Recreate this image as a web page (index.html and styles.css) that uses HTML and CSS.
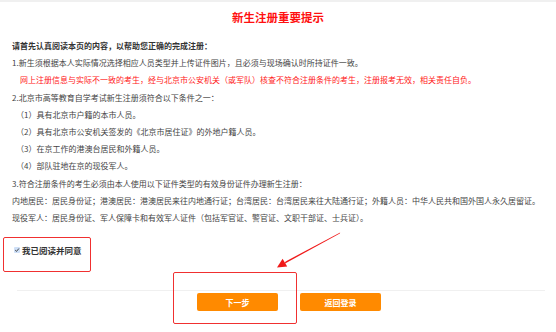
FILE: index.html
```html
<!DOCTYPE html>
<html lang="zh-CN">
<head>
<meta charset="utf-8">
<title>新生注册重要提示</title>
<link rel="stylesheet" href="styles.css">
</head>
<body>
<div class="page">
  <h1 class="title">新生注册重要提示</h1>
  <div class="content">
    <div class="line strong">请首先认真阅读本页的内容，以帮助您正确的完成注册：</div>
    <div class="line">1.新生须根据本人实际情况选择相应人员类型并上传证件图片，且必须与现场确认时所持证件一致。</div>
    <div class="line warn">网上注册信息与实际不一致的考生，经与北京市公安机关（或军队）核查不符合注册条件的考生，注册报考无效，相关责任自负。</div>
    <div class="line">2.北京市高等教育自学考试新生注册须符合以下条件之一：</div>
    <div class="line sub">（1）具有北京市户籍的本市人员。</div>
    <div class="line sub">（2）具有北京市公安机关签发的《北京市居住证》的外地户籍人员。</div>
    <div class="line sub">（3）在京工作的港澳台居民和外籍人员。</div>
    <div class="line sub">（4）部队驻地在京的现役军人。</div>
    <div class="line">3.符合注册条件的考生必须由本人使用以下证件类型的有效身份证件办理新生注册：</div>
    <div class="line">内地居民：居民身份证；港澳居民：港澳居民来往内地通行证；台湾居民：台湾居民来往大陆通行证；外籍人员：中华人民共和国外国人永久居留证。</div>
    <div class="line">现役军人：居民身份证、军人保障卡和有效军人证件（包括军官证、警官证、文职干部证、士兵证）。</div>
  </div>
  <label class="agree">
    <span class="check"><svg viewBox="0 0 6 6" width="6" height="6"><path d="M1.2 3.1 L2.5 4.4 L4.9 1.5" fill="none" stroke="#333" stroke-width="0.9"/></svg></span>
    <span class="agree-text">我已阅读并同意</span>
  </label>
  <div class="divider"></div>
  <div class="actions">
    <button class="btn">下一步</button>
    <button class="btn">返回登录</button>
  </div>

  <div class="mark mark-agree"></div>
  <div class="mark mark-next"></div>
  <svg class="arrow" width="556" height="332" viewBox="0 0 556 332">
    <polygon fill="#f01a1a" points="340.2,232.6 339.8,233.4 284.2,264.0 285.6,261.4"/>
    <polygon fill="#f01a1a" points="277,267.5 287.2,266.4 282.6,258.8"/>
  </svg>
</div>
</body>
</html>
```
FILE: styles.css
```css
html, body {
  margin: 0;
  padding: 0;
  background: #fff;
}
body {
  font-family: "Noto Sans CJK SC", "Noto Sans", sans-serif;
  color: #444;
}
.page {
  position: relative;
  width: 556px;
  height: 332px;
  box-sizing: border-box;
  border-top: 2px solid #f0f0f0;
  overflow: hidden;
}
.title {
  margin: 9px 0 0;
  font-size: 11.5px;
  line-height: 12px;
  font-weight: bold;
  color: #ff1010;
  text-align: center;
}
.content {
  margin-top: 14px;
  padding-left: 12px;
  font-size: 8px;
  line-height: 17.2px;
}
.line {
  white-space: nowrap;
}
.strong {
  font-weight: bold;
  color: #333;
}
.warn {
  color: #ff2020;
  padding-left: 8px;
}
.sub {
  padding-left: 4px;
}
.agree {
  display: flex;
  align-items: center;
  gap: 2px;
  margin: 18px 0 0 14px;
  height: 12px;
}
.check {
  display: flex;
  width: 6px;
  height: 6px;
  background: #cfe0f7;
  border-radius: 1px;
}
.agree-text {
  font-size: 8.5px;
  font-weight: bold;
  color: #333;
}
.divider {
  margin: 34px 11px 0 17px;
  height: 1px;
  background: #f0f0f0;
}
.actions {
  display: flex;
  justify-content: center;
  gap: 22px;
  padding-left: 22px;
  margin-top: 2px;
}
.btn {
  width: 81px;
  height: 18px;
  border: none;
  border-radius: 2px;
  background: #ff8a00;
  color: #fff;
  font-family: "Noto Sans CJK SC", sans-serif;
  font-size: 8px;
  font-weight: bold;
  padding: 0;
}
.mark {
  position: absolute;
  border: 1.5px solid #f03030;
  border-radius: 2px;
  box-sizing: border-box;
}
.mark-agree {
  left: 3px;
  top: 235px;
  width: 88px;
  height: 35px;
}
.mark-next {
  left: 173px;
  top: 270px;
  width: 124px;
  height: 52px;
}
.arrow {
  position: absolute;
  left: 0;
  top: -2px;
}
```
